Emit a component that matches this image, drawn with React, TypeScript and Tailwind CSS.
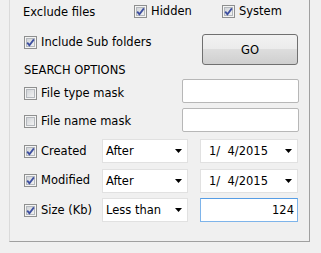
import React from 'react';

const font = { fontFamily: '"DejaVu Sans", Verdana, sans-serif' };

function Check({ checked }: { checked: boolean }) {
  return (
    <svg width="13" height="13" viewBox="0 0 13 13" className="shrink-0">
      <defs>
        <linearGradient id="cbIn" x1="0" y1="0" x2="1" y2="1">
          <stop offset="0" stopColor="#cfd2d6" />
          <stop offset="1" stopColor="#f4f4f4" />
        </linearGradient>
      </defs>
      <rect x="0.5" y="0.5" width="12" height="12" fill="#f4f4f4" stroke="#8e8f8f" />
      <rect x="2.5" y="2.5" width="8" height="8" fill="url(#cbIn)" stroke="#b4b8bd" />
      {checked && (
        <path d="M3.2 6.6 L5.4 9.2 L9.9 3.4" fill="none" stroke="#3d4fa0" strokeWidth="1.8" />
      )}
    </svg>
  );
}

function CheckLabel({ checked, label }: { checked: boolean; label: string }) {
  return (
    <div className="flex items-center gap-[4px]">
      <Check checked={checked} />
      <span className="leading-[13px] whitespace-nowrap">{label}</span>
    </div>
  );
}

function Combo({ value, width, pad }: { value: string; width: string; pad: string }) {
  return (
    <div className={`${width} h-[24px] bg-white border border-[#e1e1e1] flex items-center justify-between pr-[5px]`}>
      <span className={`${pad} whitespace-pre leading-[14px]`}>{value}</span>
      <svg width="7" height="4" viewBox="0 0 7 4">
        <path d="M0 0 H7 L3.5 4 Z" fill="#000" />
      </svg>
    </div>
  );
}

function TextBox({ value = '', width }: { value?: string; width: string }) {
  return (
    <div className={`${width} h-[24px] bg-white border border-[#b7b7b7] rounded-[2px] flex items-center justify-end pr-[3px]`}>
      {value}
    </div>
  );
}

export default function App() {
  return (
    <div className="w-[321px] h-[253px] bg-[#f0f0f0] pl-[9px] text-[11.5px] text-black overflow-hidden" style={font}>
      <div className="w-[301px] h-[242px] border-l border-r border-b border-l-[#dadada] border-r-[#a0a0a0] border-b-[#a0a0a0] pl-[13px]">
        {/* Exclude files */}
        <div className="h-[23px] flex items-center">
          <span className="w-[111px] leading-[14px]">Exclude files</span>
          <div className="w-[88px]">
            <CheckLabel checked label="Hidden" />
          </div>
          <CheckLabel checked label="System" />
        </div>

        {/* Sub folders + GO */}
        <div className="mt-[11px] h-[45px] flex items-start">
          <div className="w-[179px] pl-[1px]">
            <div className="mt-[2px]">
              <CheckLabel checked label="Include Sub folders" />
            </div>
            <div className="mt-[14px] leading-[14px] pl-[-1px]">SEARCH OPTIONS</div>
          </div>
          <button className="w-[96px] h-[31px] rounded-[3px] border border-[#707070] bg-[linear-gradient(#f2f2f2_0%,#ebebeb_50%,#dddddd_50%,#cfcfcf_100%)] flex items-center justify-center leading-[14px]">
            GO
          </button>
        </div>

        {/* mask rows */}
        <div className="pl-[1px]">
          <div className="h-[24px] flex items-start">
            <div className="w-[158px] mt-[8px]">
              <CheckLabel checked={false} label="File type mask" />
            </div>
            <TextBox width="w-[117px]" />
          </div>
          <div className="mt-[5px] h-[24px] flex items-start">
            <div className="w-[158px] mt-[7px]">
              <CheckLabel checked={false} label="File name mask" />
            </div>
            <TextBox width="w-[117px]" />
          </div>

          {/* Created */}
          <div className="mt-[7px] h-[24px] flex items-start">
            <div className="w-[78px] mt-[6px]">
              <CheckLabel checked label="Created" />
            </div>
            <Combo value="After" width="w-[86px]" pad="pl-[3px]" />
            <div className="ml-[12px]">
              <Combo value="1/  4/2015" width="w-[98px]" pad="pl-[8px]" />
            </div>
          </div>

          {/* Modified */}
          <div className="mt-[6px] h-[24px] flex items-start">
            <div className="w-[78px] mt-[5px]">
              <CheckLabel checked label="Modified" />
            </div>
            <Combo value="After" width="w-[86px]" pad="pl-[3px]" />
            <div className="ml-[12px]">
              <Combo value="1/  4/2015" width="w-[98px]" pad="pl-[8px]" />
            </div>
          </div>

          {/* Size */}
          <div className="mt-[5px] h-[24px] flex items-start">
            <div className="w-[78px] mt-[6px]">
              <CheckLabel checked label="Size (Kb)" />
            </div>
            <Combo value="Less than" width="w-[86px]" pad="pl-[3px]" />
            <div className="ml-[12px] w-[98px] h-[24px] bg-white border border-[#7eb4ea] border-t-[#569de5] flex items-center justify-end pr-[3px] leading-[14px]">
              124
            </div>
          </div>
        </div>
      </div>
    </div>
  );
}
